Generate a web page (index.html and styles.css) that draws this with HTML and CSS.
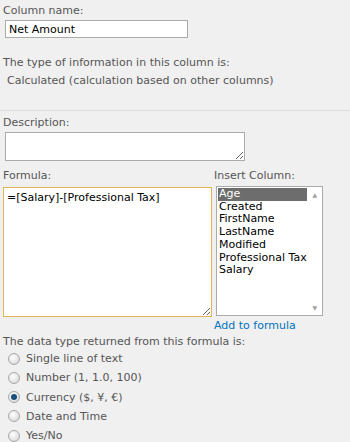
FILE: index.html
```html
<!DOCTYPE html>
<html lang="en">
<head>
    <meta charset="UTF-8">
    <title>Column settings</title>
    <link rel="stylesheet" href="styles.css">
</head>
<body>
    <div class="column-form">
        <section class="section top">
            <label class="field-label">Column name:</label>
            <input type="text" class="name-input" value="Net Amount">
            <p class="type-label">The type of information in this column is:</p>
            <p class="type-value">Calculated (calculation based on other columns)</p>
        </section>

        <section class="section bottom">
            <label class="field-label">Description:</label>
            <textarea class="desc-input"></textarea>

            <div class="formula-row">
                <div class="formula-col">
                    <label class="field-label">Formula:</label>
                    <textarea class="formula-input">=[Salary]-[Professional Tax]</textarea>
                </div>
                <div class="insert-col">
                    <label class="field-label">Insert Column:</label>
                    <div class="listbox">
                        <ul class="list-items">
                            <li class="selected">Age</li>
                            <li>Created</li>
                            <li>FirstName</li>
                            <li>LastName</li>
                            <li>Modified</li>
                            <li>Professional Tax</li>
                            <li>Salary</li>
                        </ul>
                        <div class="scrollbar">
                            <span class="arrow">&#9650;</span>
                            <span class="arrow">&#9660;</span>
                        </div>
                    </div>
                    <a href="#" class="add-link">Add to formula</a>
                </div>
            </div>

            <p class="return-label">The data type returned from this formula is:</p>
            <div class="radio-list">
                <label class="radio-item"><input type="radio" name="rtype"> Single line of text</label>
                <label class="radio-item"><input type="radio" name="rtype"> Number (1, 1.0, 100)</label>
                <label class="radio-item"><input type="radio" name="rtype" checked> Currency ($, &yen;, &euro;)</label>
                <label class="radio-item"><input type="radio" name="rtype"> Date and Time</label>
                <label class="radio-item"><input type="radio" name="rtype"> Yes/No</label>
            </div>
        </section>
    </div>
</body>
</html>
```

FILE: styles.css
```css
:root {
    --background: #F0F0F0;
    --label: #555555;
    --text: #000000;
    --border: #ABABAB;
    --focus: #E3B35A;
    --link: #0072BC;
}

* {
    box-sizing: border-box;
    margin: 0;
    padding: 0;
}

body {
    background-color: var(--background);
    font-family: 'DejaVu Sans', Verdana, sans-serif;
    font-size: 11px;
    color: var(--label);
}

.section {
    padding: 0 3px;
}

.top {
    padding-top: 4px;
    padding-bottom: 22px;
    border-bottom: 1px solid #DDDDDD;
}

.bottom {
    padding-top: 5px;
}

.field-label {
    display: block;
    line-height: 14px;
}

.name-input {
    display: block;
    width: 183px;
    height: 18px;
    margin: 2px 0 0 2px;
    padding: 0 3px;
    border: 1px solid var(--border);
    background: #FFFFFF;
    font-family: inherit;
    font-size: 11px;
    color: var(--text);
    outline: none;
}

.type-label {
    margin-top: 18px;
    line-height: 14px;
}

.type-value {
    margin-top: 4px;
    padding-left: 4px;
    line-height: 14px;
}

.desc-input {
    display: block;
    width: 240px;
    height: 29px;
    margin: 2px 0 0 2px;
    border: 1px solid var(--border);
    background: #FFFFFF;
    resize: both;
    outline: none;
}

.formula-row {
    display: flex;
    margin-top: 8px;
}

.formula-col {
    width: 211px;
}

.formula-input {
    display: block;
    width: 209px;
    height: 130px;
    margin-top: 4px;
    padding: 3px 3px;
    border: 1px solid var(--focus);
    background: #FFFFFF;
    font-family: inherit;
    font-size: 11px;
    color: var(--text);
    resize: both;
    outline: none;
}

.listbox {
    display: flex;
    width: 107px;
    height: 130px;
    margin-top: 3px;
    margin-left: 2px;
    border: 1px solid var(--border);
    background: #FFFFFF;
}

.list-items {
    list-style: none;
    flex: 1;
    padding: 1px 1px;
    color: var(--text);
}

.list-items li {
    line-height: 12.7px;
    padding-left: 1px;
    white-space: nowrap;
}

.list-items li.selected {
    background: #6D6D6D;
    color: #FFFFFF;
}

.scrollbar {
    width: 15px;
    display: flex;
    flex-direction: column;
    justify-content: space-between;
    align-items: center;
    padding: 4px 0;
}

.arrow {
    font-size: 6px;
    color: #A0A0A0;
}

.add-link {
    display: block;
    margin-top: 3px;
    color: var(--link);
    text-decoration: none;
    line-height: 14px;
}

.return-label {
    margin-top: 2px;
    line-height: 14px;
}

.radio-list {
    display: flex;
    flex-direction: column;
    padding-left: 5px;
}

.radio-item {
    display: flex;
    align-items: center;
    gap: 6px;
    height: 19.25px;
}

.radio-item input {
    appearance: none;
    width: 12px;
    height: 12px;
    border-radius: 50%;
    border: 1px solid #A8A8A8;
    background: radial-gradient(circle at 40% 35%, #FFFFFF 0%, #E4E4E4 60%, #C9C9C9 100%);
    display: flex;
    align-items: center;
    justify-content: center;
}

.radio-item input:checked::after {
    content: "";
    width: 6px;
    height: 6px;
    border-radius: 50%;
    background: #1C4F7C;
}
```
